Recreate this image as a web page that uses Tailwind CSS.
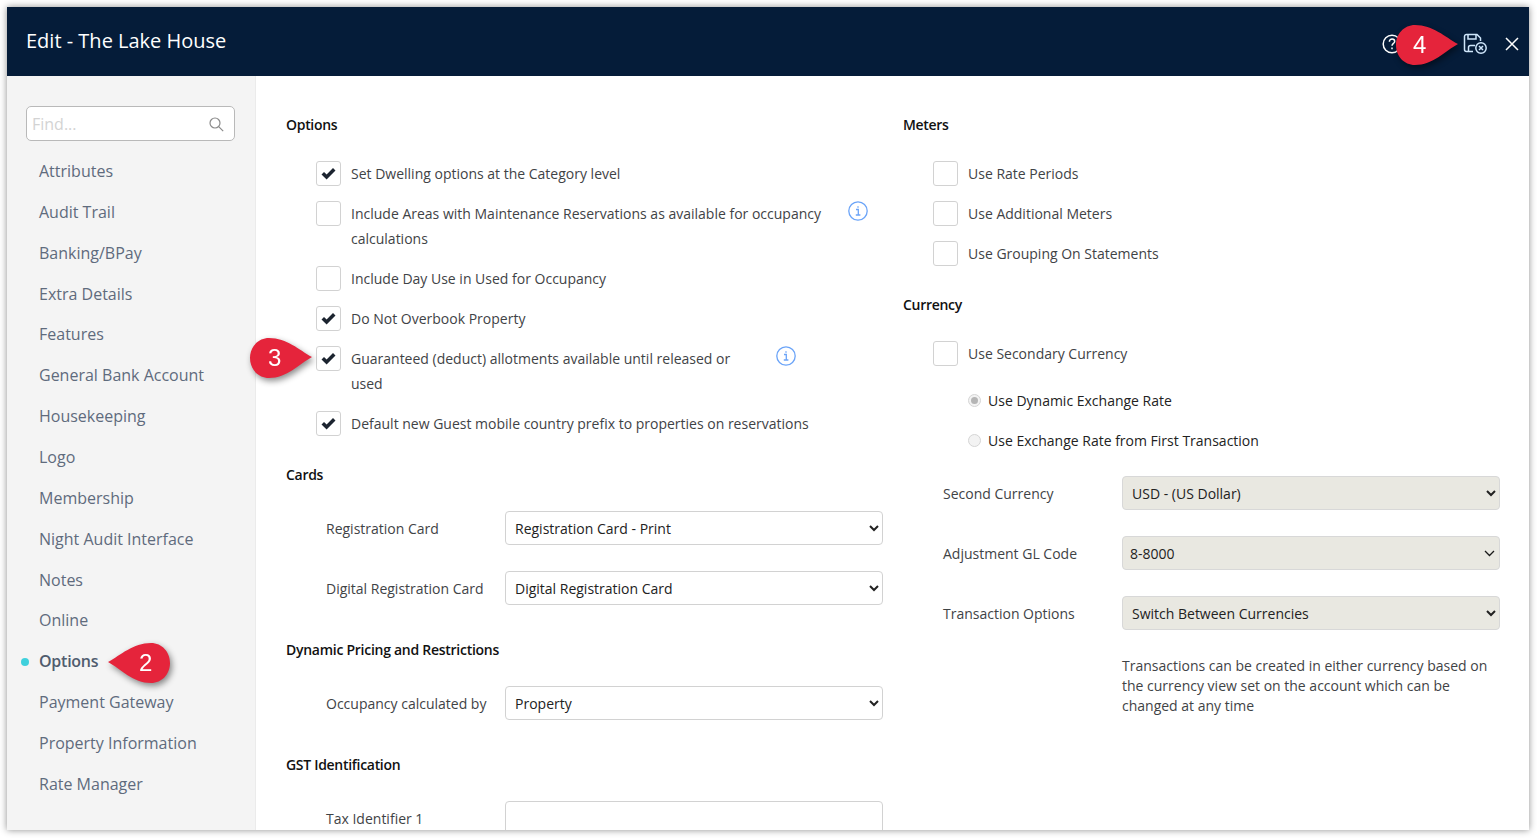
<!DOCTYPE html>
<html lang="en">
<head>
    <meta charset="UTF-8">
    <meta name="viewport" content="width=device-width, initial-scale=1.0">
    <script src="https://cdn.jsdelivr.net/npm/@tailwindcss/browser@4"></script>
    <title>Edit - The Lake House</title>
</head>
<body class="w-full h-[838px] overflow-hidden bg-white font-['Open_Sans',sans-serif] text-[14px] leading-[25px] text-[#3f4346]">
    <div class="relative mt-[7px] ml-[7px] w-[1522px] h-[823px] bg-white shadow-[0_0_7px_rgba(0,0,0,0.45)] flex flex-col">
        <header class="h-[69px] shrink-0 bg-[#051c39] flex items-center justify-between pl-[19px] pr-[9px] pb-[2px]">
            <h1 class="text-[20px] text-white">Edit - The Lake House</h1>
            <div class="flex items-center mt-[7px] text-white">
                <svg class="w-[20px] h-[20px] mr-[61px]" viewBox="0 0 20 20" fill="none" stroke="currentColor" stroke-width="1.5"><circle cx="10" cy="10" r="8.8"/><path d="M7.4 7.7c0-1.6 1.2-2.6 2.7-2.6s2.6 1 2.6 2.3c0 2.1-2.700 2-2.700 4.400"/><path d="M10 13.600v1.600"/></svg>
                <svg class="w-[24px] h-[22px] mr-[17px]" viewBox="0 0 24 22" fill="none" stroke="#cfe6fb" stroke-width="1.5"><path d="M10 18.500H3.500a2 2 0 0 1-2-2V3.500a2 2 0 0 1 2-2h10.500l3.500 3.500V8"/><path d="M5 1.500V6h8V1.500"/><path d="M12 12.500H7.500a2 2 0 0 0-2 2v4"/><circle cx="18" cy="15" r="5.200"/><path d="M16 13l4 4M20 13l-4 4"/></svg>
                <svg class="w-[16px] h-[16px]" viewBox="0 0 16 16" fill="none" stroke="currentColor" stroke-width="1.500"><path d="M2 2l12 12M14 2L2 14"/></svg>
            </div>
        </header>
        <div class="flex flex-1 min-h-0">
            <aside class="w-[249px] shrink-0 bg-[#f4f4f4] border-r border-[#ebebeb] pl-[19px] pr-[20px] pt-[30px] text-[16px] text-[#5f6b7d]">
                <div class="h-[35px] bg-white border border-[#b9b9b9] rounded-[5px] flex items-center justify-between pl-[5px] pr-[10px] mb-[10px]">
                    <span class="text-[#d3d3d3] mt-[1px]">Find...</span>
                    <svg class="w-[15px] h-[15px] mt-[1px]" viewBox="0 0 15 15" fill="none" stroke="#8b8b8b" stroke-width="1.200"><circle cx="6" cy="6" r="5"/><path d="M9.700 9.700L14.200 14.200"/></svg>
                </div>
                <ul class="pl-[13px]">
                    <li class="h-[40.87px] flex items-center">Attributes</li>
                    <li class="h-[40.87px] flex items-center">Audit Trail</li>
                    <li class="h-[40.87px] flex items-center">Banking/BPay</li>
                    <li class="h-[40.87px] flex items-center">Extra Details</li>
                    <li class="h-[40.87px] flex items-center">Features</li>
                    <li class="h-[40.87px] flex items-center">General Bank Account</li>
                    <li class="h-[40.87px] flex items-center">Housekeeping</li>
                    <li class="h-[40.87px] flex items-center">Logo</li>
                    <li class="h-[40.87px] flex items-center">Membership</li>
                    <li class="h-[40.87px] flex items-center">Night Audit Interface</li>
                    <li class="h-[40.87px] flex items-center">Notes</li>
                    <li class="h-[40.87px] flex items-center">Online</li>
                    <li class="relative h-[40.87px] flex items-center font-semibold tracking-[-0.25px] text-[#505c6e]">
                        <span class="absolute left-[-18px] w-[8px] h-[8px] rounded-full bg-[#3fd0dc]"></span>Options
                    </li>
                    <li class="h-[40.87px] flex items-center">Payment Gateway</li>
                    <li class="h-[40.87px] flex items-center">Property Information</li>
                    <li class="h-[40.87px] flex items-center">Rate Manager</li>
                </ul>
            </aside>
            <main class="flex-1 min-w-0 overflow-hidden pt-[36px] pl-[30px] flex gap-[20px]">
                <section class="w-[597px] shrink-0">
                    <h2 class="font-semibold text-[#111] tracking-[-0.3px] mb-[24px]">Options</h2>
                    <div class="pl-[30px]">
                        <div class="flex mb-[15px]">
                            <span class="w-[25px] h-[25px] shrink-0 flex items-center justify-center bg-white border border-[#d2d2d2] rounded-[3px] mr-[10px]"><svg class="w-[15px] h-[13px]" viewBox="0 0 15 13"><path d="M.5 7.400L3 4.900l2.600 2.600L12 1l2.500 2.500-8.900 8.900z" fill="#1c2430"/></svg></span>
                            <p>Set Dwelling options at the Category level</p>
                        </div>
                        <div class="flex mb-[15px]">
                            <span class="w-[25px] h-[25px] shrink-0 bg-white border border-[#d2d2d2] rounded-[3px] mr-[10px]"></span>
                            <p class="w-[497px]">Include Areas with Maintenance Reservations as available for occupancy<br>calculations</p>
                            <svg class="w-[20px] h-[20px]" viewBox="0 0 20 20" fill="none" stroke="#6ba4f8" stroke-width="1.300"><circle cx="10" cy="10" r="9.200"/><path d="M8 8.500h2.300v5.500M7.800 14h4.600M10 5.200v1.600"/></svg>
                        </div>
                        <div class="flex mb-[15px]">
                            <span class="w-[25px] h-[25px] shrink-0 bg-white border border-[#d2d2d2] rounded-[3px] mr-[10px]"></span>
                            <p>Include Day Use in Used for Occupancy</p>
                        </div>
                        <div class="flex mb-[15px]">
                            <span class="w-[25px] h-[25px] shrink-0 flex items-center justify-center bg-white border border-[#d2d2d2] rounded-[3px] mr-[10px]"><svg class="w-[15px] h-[13px]" viewBox="0 0 15 13"><path d="M.5 7.400L3 4.900l2.600 2.600L12 1l2.500 2.500-8.900 8.900z" fill="#1c2430"/></svg></span>
                            <p>Do Not Overbook Property</p>
                        </div>
                        <div class="flex mb-[15px]">
                            <span class="w-[25px] h-[25px] shrink-0 flex items-center justify-center bg-white border border-[#d2d2d2] rounded-[3px] mr-[10px]"><svg class="w-[15px] h-[13px]" viewBox="0 0 15 13"><path d="M.5 7.400L3 4.900l2.600 2.600L12 1l2.500 2.500-8.900 8.900z" fill="#1c2430"/></svg></span>
                            <p class="w-[425px]">Guaranteed (deduct) allotments available until released or<br>used</p>
                            <svg class="w-[20px] h-[20px]" viewBox="0 0 20 20" fill="none" stroke="#6ba4f8" stroke-width="1.300"><circle cx="10" cy="10" r="9.200"/><path d="M8 8.500h2.300v5.500M7.800 14h4.600M10 5.200v1.600"/></svg>
                        </div>
                        <div class="flex">
                            <span class="w-[25px] h-[25px] shrink-0 flex items-center justify-center bg-white border border-[#d2d2d2] rounded-[3px] mr-[10px]"><svg class="w-[15px] h-[13px]" viewBox="0 0 15 13"><path d="M.5 7.400L3 4.900l2.600 2.600L12 1l2.500 2.500-8.900 8.900z" fill="#1c2430"/></svg></span>
                            <p>Default new Guest mobile country prefix to properties on reservations</p>
                        </div>
                    </div>
                    <h2 class="font-semibold text-[#111] tracking-[-0.3px] mt-[26px] mb-[24px]">Cards</h2>
                    <div class="pl-[40px] flex items-center mb-[26px]">
                        <label class="w-[179px] shrink-0">Registration Card</label>
                        <select class="w-[378px] h-[34px] pl-[5px] bg-white border border-[#d2d2d2] rounded-[4px] text-[#222]"><option>Registration Card - Print</option></select>
                    </div>
                    <div class="pl-[40px] flex items-center">
                        <label class="w-[179px] shrink-0">Digital Registration Card</label>
                        <select class="w-[378px] h-[34px] pl-[5px] bg-white border border-[#d2d2d2] rounded-[4px] text-[#222]"><option>Digital Registration Card</option></select>
                    </div>
                    <h2 class="font-semibold text-[#111] tracking-[-0.27px] mt-[32px] mb-[24px]">Dynamic Pricing and Restrictions</h2>
                    <div class="pl-[40px] flex items-center">
                        <label class="w-[179px] shrink-0">Occupancy calculated by</label>
                        <select class="w-[378px] h-[34px] pl-[5px] bg-white border border-[#d2d2d2] rounded-[4px] text-[#222]"><option>Property</option></select>
                    </div>
                    <h2 class="font-semibold text-[#111] tracking-[-0.3px] mt-[32px] mb-[24px]">GST Identification</h2>
                    <div class="pl-[40px] flex items-start">
                        <label class="w-[179px] shrink-0 mt-[5px]">Tax Identifier 1</label>
                        <input class="w-[378px] h-[34px] bg-white border border-[#d2d2d2] rounded-[4px]" type="text">
                    </div>
                </section>
                <section class="w-[597px] shrink-0">
                    <h2 class="font-semibold text-[#111] tracking-[-0.3px] mb-[24px]">Meters</h2>
                    <div class="pl-[30px]">
                        <div class="flex mb-[15px]">
                            <span class="w-[25px] h-[25px] shrink-0 bg-white border border-[#d2d2d2] rounded-[3px] mr-[10px]"></span>
                            <p>Use Rate Periods</p>
                        </div>
                        <div class="flex mb-[15px]">
                            <span class="w-[25px] h-[25px] shrink-0 bg-white border border-[#d2d2d2] rounded-[3px] mr-[10px]"></span>
                            <p>Use Additional Meters</p>
                        </div>
                        <div class="flex">
                            <span class="w-[25px] h-[25px] shrink-0 bg-white border border-[#d2d2d2] rounded-[3px] mr-[10px]"></span>
                            <p>Use Grouping On Statements</p>
                        </div>
                    </div>
                    <h2 class="font-semibold text-[#111] tracking-[-0.3px] mt-[26px] mb-[24px]">Currency</h2>
                    <div class="pl-[30px]">
                        <div class="flex">
                            <span class="w-[25px] h-[25px] shrink-0 bg-white border border-[#d2d2d2] rounded-[3px] mr-[10px]"></span>
                            <p>Use Secondary Currency</p>
                        </div>
                        <div class="flex items-center pl-[35px] mt-[22px] text-[#222]">
                            <span class="w-[13px] h-[13px] rounded-full border border-[#d5d5d5] bg-[#f3f3f3] flex items-center justify-center mr-[7px]"><span class="w-[7px] h-[7px] rounded-full bg-[#b5b5b5]"></span></span>
                            <p>Use Dynamic Exchange Rate</p>
                        </div>
                        <div class="flex items-center pl-[35px] mt-[15px] text-[#222]">
                            <span class="w-[13px] h-[13px] rounded-full border border-[#d5d5d5] bg-[#f3f3f3] mr-[7px]"></span>
                            <p>Use Exchange Rate from First Transaction</p>
                        </div>
                    </div>
                    <div class="pl-[40px] mt-[23px] flex items-center mb-[26px]">
                        <label class="w-[179px] shrink-0">Second Currency</label>
                        <select class="w-[378px] h-[34px] pl-[5px] bg-[#e9e8e1] border border-[#d8d8d8] rounded-[4px] text-[#222]"><option>USD - (US Dollar)</option></select>
                    </div>
                    <div class="pl-[40px] flex items-center mb-[26px]">
                        <label class="w-[179px] shrink-0">Adjustment GL Code</label>
                        <div class="relative w-[378px] h-[34px]">
                            <select class="appearance-none w-full h-full pl-[7px] bg-[#e9e8e1] border border-[#d8d8d8] rounded-[4px] text-[#222]"><option>8-8000</option></select>
                            <svg class="absolute right-[5px] top-[14px] w-[11px] h-[7px]" viewBox="0 0 11 7" fill="none" stroke="#1a1a1a" stroke-width="1.300"><path d="M1 1l4.500 4.500L10 1"/></svg>
                        </div>
                    </div>
                    <div class="pl-[40px] flex items-center">
                        <label class="w-[179px] shrink-0">Transaction Options</label>
                        <select class="w-[378px] h-[34px] pl-[5px] bg-[#e9e8e1] border border-[#d8d8d8] rounded-[4px] text-[#222]"><option>Switch Between Currencies</option></select>
                    </div>
                    <p class="ml-[219px] mt-[26px] w-[378px] leading-[20px]">Transactions can be created in either currency based on the currency view set on the account which can be changed at any time</p>
                </section>
            </main>
        </div>
        <!-- callouts -->
        <div class="absolute left-[100px] top-[635px] w-[64px] h-[42px] drop-shadow-[2px_3px_3px_rgba(0,0,0,0.45)]">
            <svg class="absolute inset-0 w-full h-full" viewBox="0 0 64 42"><path d="M1 20C14 13 26 1 44 1c11 0 19 9 19 20s-8 20-19 20C26 41 14 27 1 20z" fill="#e5243b"/></svg>
            <span class="absolute left-[32px] top-[8px] font-['Liberation_Sans',sans-serif] text-[24px] text-white">2</span>
        </div>
        <div class="absolute left-[242px] top-[330px] w-[64px] h-[42px] drop-shadow-[2px_3px_3px_rgba(0,0,0,0.45)]">
            <svg class="absolute inset-0 w-full h-full" viewBox="0 0 64 42"><path d="M63 20C50 13 38 1 20 1 9 1 1 10 1 21s8 20 19 20c18 0 30-14 43-21z" fill="#e5243b"/></svg>
            <span class="absolute left-[19px] top-[8px] font-['Liberation_Sans',sans-serif] text-[24px] text-white">3</span>
        </div>
        <div class="absolute left-[1388px] top-[17px] w-[64px] h-[42px] drop-shadow-[2px_3px_3px_rgba(0,0,0,0.45)]">
            <svg class="absolute inset-0 w-full h-full" viewBox="0 0 64 42"><path d="M63 20C50 13 38 1 20 1 9 1 1 10 1 21s8 20 19 20c18 0 30-14 43-21z" fill="#e5243b"/></svg>
            <span class="absolute left-[18px] top-[8px] font-['Liberation_Sans',sans-serif] text-[24px] text-white">4</span>
        </div>
    </div>
</body>
</html>
